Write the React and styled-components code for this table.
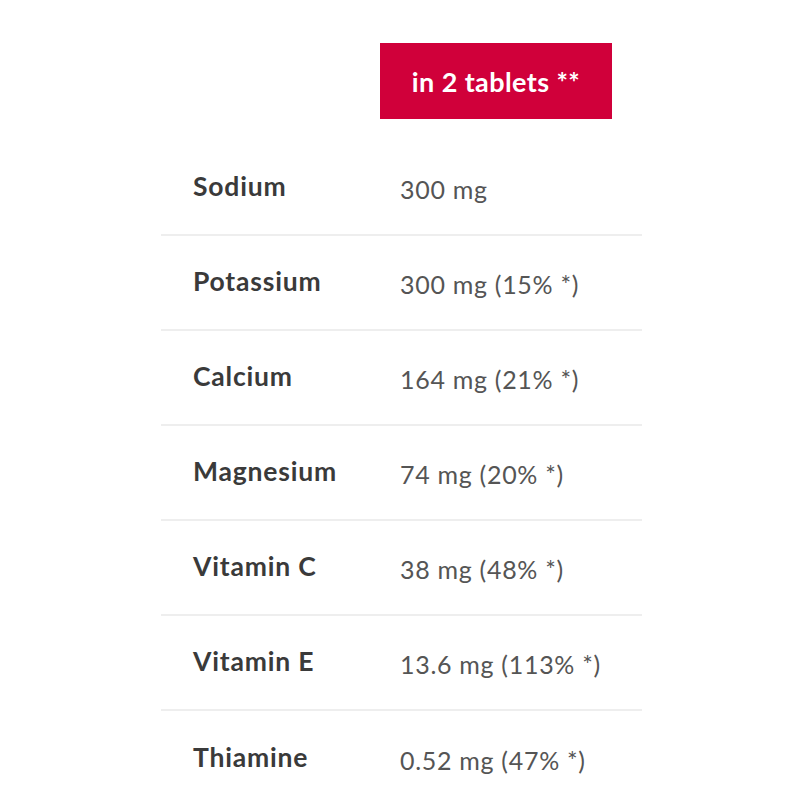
import React from 'react';
import styled, { createGlobalStyle } from 'styled-components';

const GlobalStyle = createGlobalStyle`
    html, body {
        margin: 0;
        padding: 0;
        background: #ffffff;
    }
    body {
        font-family: Lato, "Liberation Sans", sans-serif;
    }
`;

const Page = styled.div`
    width: 800px;
    height: 800px;
    overflow: hidden;
    padding-top: 43px;
    box-sizing: border-box;
`;

const Table = styled.div`
    width: 481px;
    margin-left: 161px;
`;

const HeadRow = styled.div`
    display: grid;
    grid-template-columns: 219px 232px;
    margin-bottom: 22px;
`;

const HeadCell = styled.div`
    grid-column: 2;
    height: 76px;
    background: #d0003a;
    color: #ffffff;
    font-weight: 700;
    font-size: 27px;
    letter-spacing: 0.4px;
    display: flex;
    align-items: center;
    justify-content: center;
    box-sizing: border-box;
`;

const Row = styled.div`
    display: grid;
    grid-template-columns: 219px 1fr;
    align-items: center;
    height: 95px;
    border-bottom: ${p => (p.last ? 'none' : '2px solid #eeeeee')};
    box-sizing: border-box;
`;

const Label = styled.div`
    padding-left: 32px;
    font-weight: 700;
    font-size: 26.5px;
    letter-spacing: 0.8px;
    color: #3a3a3a;
    margin-top: -4px;
`;

const Value = styled.div`
    padding-left: 20px;
    font-size: 25px;
    letter-spacing: 0.7px;
    color: #555555;
    margin-top: 2px;
`;

const rows = [
    ['Sodium', '300 mg'],
    ['Potassium', '300 mg (15% *)'],
    ['Calcium', '164 mg (21% *)'],
    ['Magnesium', '74 mg (20% *)'],
    ['Vitamin C', '38 mg (48% *)'],
    ['Vitamin E', '13.6 mg (113% *)'],
    ['Thiamine', '0.52 mg (47% *)'],
];

const App = () => {
    return (
        <Page>
            <GlobalStyle />
            <Table>
                <HeadRow>
                    <HeadCell>in 2 tablets **</HeadCell>
                </HeadRow>
                {rows.map(([name, amount], i) => (
                    <Row key={name} last={i === rows.length - 1}>
                        <Label>{name}</Label>
                        <Value>{amount}</Value>
                    </Row>
                ))}
            </Table>
        </Page>
    );
};

export default App;
